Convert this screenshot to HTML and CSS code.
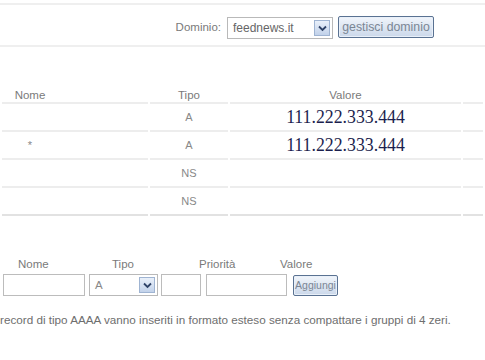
FILE: index.html
```html
<!DOCTYPE html>
<html lang="it">
<head>
    <meta charset="UTF-8">
    <title>Gestione DNS</title>
    <link rel="stylesheet" href="styles.css">
</head>
<body>
    <div class="domain-bar">
        <span class="domain-label">Dominio:</span>
        <div class="select select-domain">
            <span class="select-value">feednews.it</span>
            <span class="select-arrow">
                <svg width="9" height="7" viewBox="0 0 9 7"><path d="M1 1.5 L4.5 5 L8 1.5" fill="none" stroke="#2f4368" stroke-width="1.8"/></svg>
            </span>
        </div>
        <button class="btn btn-domain">gestisci dominio</button>
    </div>

    <table class="records">
        <thead>
            <tr>
                <th class="col-name">Nome</th>
                <th class="col-type">Tipo</th>
                <th class="col-value">Valore</th>
                <th class="col-extra"></th>
            </tr>
        </thead>
        <tbody>
            <tr>
                <td class="name"></td>
                <td>A</td>
                <td class="ip">111.222.333.444</td>
                <td></td>
            </tr>
            <tr>
                <td class="name">*</td>
                <td>A</td>
                <td class="ip">111.222.333.444</td>
                <td></td>
            </tr>
            <tr>
                <td class="name"></td>
                <td>NS</td>
                <td></td>
                <td></td>
            </tr>
            <tr class="last">
                <td class="name"></td>
                <td>NS</td>
                <td></td>
                <td></td>
            </tr>
        </tbody>
    </table>

    <div class="add-form">
        <div class="form-labels">
            <span class="lbl-name">Nome</span>
            <span class="lbl-type">Tipo</span>
            <span class="lbl-prio">Priorità</span>
            <span class="lbl-value">Valore</span>
        </div>
        <div class="form-fields">
            <input class="field field-name" type="text">
            <div class="select select-type">
                <span class="select-value">A</span>
                <span class="select-arrow">
                    <svg width="9" height="7" viewBox="0 0 9 7"><path d="M1 1.5 L4.5 5 L8 1.5" fill="none" stroke="#2f4368" stroke-width="1.8"/></svg>
                </span>
            </div>
            <input class="field field-prio" type="text">
            <input class="field field-value" type="text">
            <button class="btn btn-add">Aggiungi</button>
        </div>
    </div>

    <p class="note">record di tipo AAAA vanno inseriti in formato esteso senza compattare i gruppi di 4 zeri.</p>
</body>
</html>
```

FILE: styles.css
```css
body {
    margin: 0;
    width: 485px;
    height: 360px;
    overflow: hidden;
    background: #fff;
    font-family: 'Liberation Sans', Arial, sans-serif;
    font-size: 11.5px;
    color: #777;
}

/* barra dominio */
.domain-bar {
    margin-top: 3px;
    border-top: 2px solid #efefef;
    border-bottom: 2px solid #efefef;
    display: flex;
    justify-content: flex-end;
    align-items: center;
    gap: 5px;
    padding: 10px 51px 6px 0;
}

.domain-label {
    margin-right: 1px;
    font-size: 11.5px;
    color: #7a7a7a;
}

.select {
    box-sizing: border-box;
    height: 22px;
    border: 1px solid #b9b9b9;
    background: #fff;
    display: flex;
    align-items: center;
    justify-content: space-between;
    padding: 0 2px 0 5px;
}

.select-domain {
    width: 106px;
    margin-top: 2px;
}

.select-value {
    color: #666;
    font-size: 12px;
}

.select-arrow {
    box-sizing: border-box;
    width: 16px;
    height: 16px;
    border: 1px solid #9fb4d2;
    background: linear-gradient(#e9f0fa, #c2d2ea);
    display: flex;
    align-items: center;
    justify-content: center;
}

.btn {
    box-sizing: border-box;
    font-family: inherit;
    color: #7b8694;
    border: 1px solid #5a7292;
    border-radius: 2px;
    background: linear-gradient(#f1f5fb, #cbd8ea);
    box-shadow: inset 0 0 0 1px #e9f0f9;
    padding: 0 2px;
    cursor: pointer;
}

.btn-domain {
    width: 96px;
    height: 22px;
    font-size: 12.3px;
}

/* tabella record */
.records {
    width: 485px;
    table-layout: fixed;
    margin-top: 36px;
    border-collapse: separate;
    border-spacing: 2px 0;
}

.records th,
.records td {
    padding: 0;
    text-align: center;
    font-weight: normal;
    border-bottom: 2px solid #ededed;
}

.records th {
    height: 18px;
    color: #7a7a7a;
    vertical-align: bottom;
    padding-bottom: 1px;
}

.records td {
    height: 26px;
    color: #888;
    font-size: 11px;
}

.records tr.last td {
    border-bottom-color: #e2e2e2;
}

/* la colonna nome ha il testo centrato a sinistra */
.records .col-name,
.records td.name {
    padding-right: 90px;
}

.col-name { width: 56px; }
.col-type { width: 78px; }
.col-value { width: 231px; }
.col-extra { width: 20px; }

.records td.ip {
    font-family: 'Liberation Serif', 'Times New Roman', serif;
    font-size: 17.8px;
    color: #1c1f4e;
}

/* form aggiunta */
.add-form {
    margin-top: 42px;
}

.form-labels {
    display: grid;
    grid-template-columns: 18px 94px 87px 81px auto;
    color: #7a7a7a;
    margin-bottom: 4px;
}

.lbl-name { grid-column: 2; }
.lbl-type { grid-column: 3; }
.lbl-prio { grid-column: 4; }
.lbl-value { grid-column: 5; }

.form-fields {
    display: flex;
    align-items: center;
    padding-left: 3px;
}

.field {
    box-sizing: border-box;
    height: 22px;
    border: 1px solid #bcbcbc;
    background: #fff;
    padding: 0;
}

.field-name { width: 82px; margin-right: 4px; }
.select-type { width: 69px; margin-right: 3px; }
.field-prio { width: 40px; margin-right: 5px; }
.field-value { width: 81px; margin-right: 6px; }

.select-type .select-value {
    color: #888;
    font-size: 11.5px;
}

.btn-add {
    width: 45px;
    height: 21px;
    font-size: 10.5px;
    padding: 0;
}

.note {
    margin: 17px 0 0;
    font-size: 11.7px;
    color: #6e6e6e;
    white-space: nowrap;
}
```
